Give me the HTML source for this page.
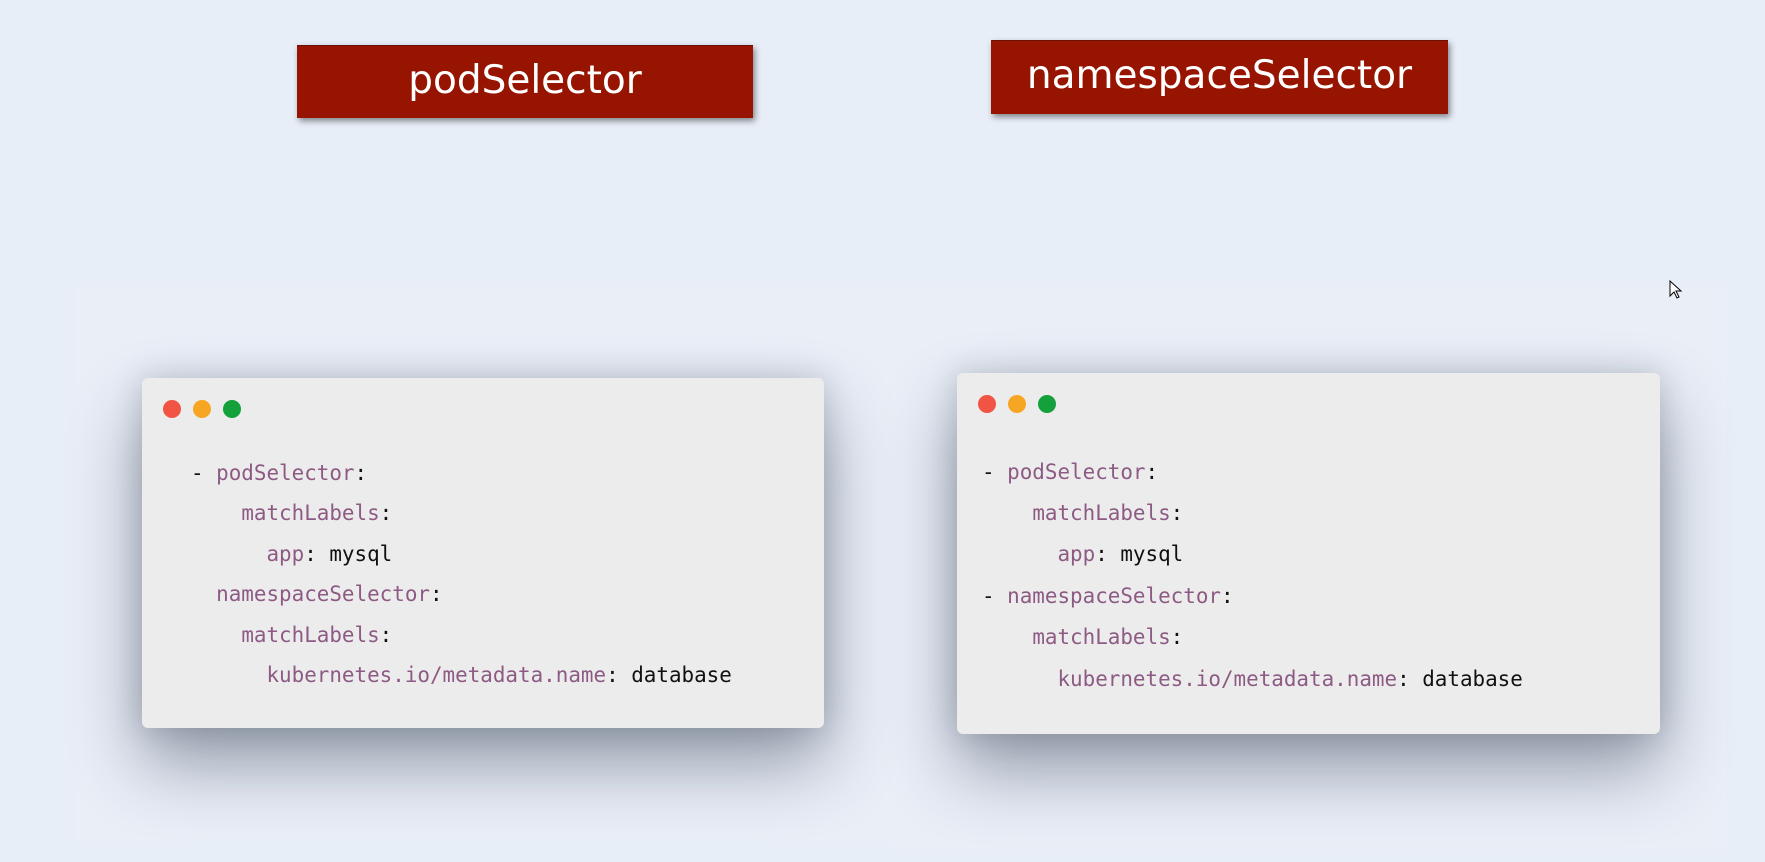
<!DOCTYPE html>
<html><head><meta charset="utf-8"><style>
html,body{margin:0;padding:0}
body{width:1765px;height:862px;background:#e8eef8;position:relative;overflow:hidden;font-family:"Liberation Sans",sans-serif}
.panel{position:absolute;background:#e9eef7}
.label{position:absolute;background:#971500;color:#fff;text-align:center;font-family:"DejaVu Sans","Liberation Sans",sans-serif;font-size:39px;box-shadow:2px 3px 6px rgba(0,0,0,.45);border-top:1px solid #6e1000}
.card{position:absolute;background:#ececec;border-radius:6px;box-shadow:0 35px 70px rgba(40,50,70,.45),0 0 30px rgba(40,50,70,.2)}
.dot{position:absolute;width:18px;height:18px;border-radius:50%;top:22px}
.code{position:absolute;font-family:"DejaVu Sans Mono","Liberation Mono",monospace;font-size:20.9px;white-space:pre;color:#111}
.k{color:#8d5a84}
.code div{position:absolute;left:0}
</style></head><body>
<div class="panel" style="left:76px;top:287px;width:813px;height:554px"></div>
<div class="panel" style="left:890px;top:287px;width:836px;height:562px"></div>
<div class="label" style="left:297px;top:45px;width:456px;height:72px;line-height:70px">podSelector</div>
<div class="label" style="left:991px;top:40px;width:457px;height:73px;line-height:70px">namespaceSelector</div>

<div class="card" style="left:142px;top:378px;width:682px;height:350px">
<div class="dot" style="left:21px;background:#f15444"></div>
<div class="dot" style="left:51px;background:#f6a623"></div>
<div class="dot" style="left:81px;background:#14a03a"></div>
<div class="code" style="left:49px;top:0">
<div style="top:83px">- <span class="k">podSelector</span>:</div>
<div style="top:123px">    <span class="k">matchLabels</span>:</div>
<div style="top:164px">      <span class="k">app</span>: mysql</div>
<div style="top:204px">  <span class="k">namespaceSelector</span>:</div>
<div style="top:245px">    <span class="k">matchLabels</span>:</div>
<div style="top:285px">      <span class="k">kubernetes.io/metadata.name</span>: database</div>
</div></div>

<div class="card" style="left:957px;top:373px;width:703px;height:361px">
<div class="dot" style="left:21px;background:#f15444"></div>
<div class="dot" style="left:51px;background:#f6a623"></div>
<div class="dot" style="left:81px;background:#14a03a"></div>
<div class="code" style="left:25px;top:0">
<div style="top:87px">- <span class="k">podSelector</span>:</div>
<div style="top:128px">    <span class="k">matchLabels</span>:</div>
<div style="top:169px">      <span class="k">app</span>: mysql</div>
<div style="top:211px">- <span class="k">namespaceSelector</span>:</div>
<div style="top:252px">    <span class="k">matchLabels</span>:</div>
<div style="top:294px">      <span class="k">kubernetes.io/metadata.name</span>: database</div>
</div></div>

<svg style="position:absolute;left:1669px;top:280px" width="14" height="20" viewBox="0 0 14 20"><path d="M1 1 L1 16 L5 12 L8 18 L10 17 L7 11 L12 11 Z" fill="#fff" stroke="#000" stroke-width="1"/></svg>
</body></html>
